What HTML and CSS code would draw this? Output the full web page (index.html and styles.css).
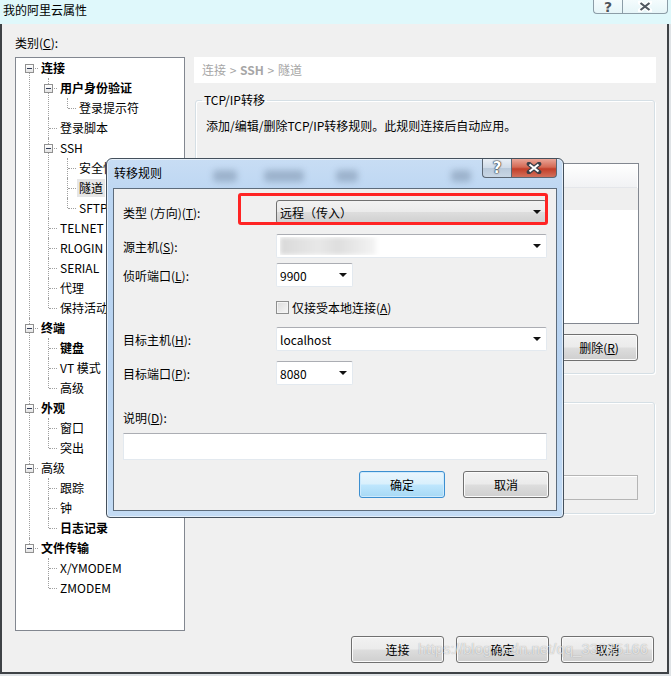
FILE: index.html
```html
<!DOCTYPE html>
<html lang="zh-CN">
<head>
<meta charset="utf-8">
<title>我的阿里云属性</title>
<link rel="stylesheet" href="styles.css">
</head>
<body>
<div class="window">
  <div class="titlebar">
    <span class="title">我的阿里云属性</span>
    <div class="capbtns">
      <span class="cap help">?</span>
      <span class="cap close"><svg width="14" height="11" viewBox="0 0 14 11"><path d="M2 1.5 L12 9.5 M12 1.5 L2 9.5" stroke="#fff" stroke-width="4.5" stroke-linecap="round"/><path d="M2.5 2 L11.5 9 M11.5 2 L2.5 9" stroke="#505860" stroke-width="2.2"/></svg></span>
    </div>
  </div>
  <div class="frame">
    <div class="catlabel">类别(<u>C</u>):</div>
    <div class="main">
      <div class="treebox">
        <ul class="tree">
          <li><div class="row"><span class="exp"></span><span class="lbl b">连接</span></div>
            <ul>
              <li><div class="row"><span class="exp"></span><span class="lbl b">用户身份验证</span></div>
                <ul><li><div class="row"><span class="lbl">登录提示符</span></div></li></ul>
              </li>
              <li><div class="row"><span class="lbl">登录脚本</span></div></li>
              <li><div class="row"><span class="exp"></span><span class="lbl">SSH</span></div>
                <ul>
                  <li><div class="row"><span class="lbl">安全性</span></div></li>
                  <li><div class="row"><span class="lbl sel">隧道</span></div></li>
                  <li><div class="row"><span class="lbl">SFTP</span></div></li>
                </ul>
              </li>
              <li><div class="row"><span class="lbl">TELNET</span></div></li>
              <li><div class="row"><span class="lbl">RLOGIN</span></div></li>
              <li><div class="row"><span class="lbl">SERIAL</span></div></li>
              <li><div class="row"><span class="lbl">代理</span></div></li>
              <li><div class="row"><span class="lbl">保持活动</span></div></li>
            </ul>
          </li>
          <li><div class="row"><span class="exp"></span><span class="lbl b">终端</span></div>
            <ul>
              <li><div class="row"><span class="lbl b">键盘</span></div></li>
              <li><div class="row"><span class="lbl">VT 模式</span></div></li>
              <li><div class="row"><span class="lbl">高级</span></div></li>
            </ul>
          </li>
          <li><div class="row"><span class="exp"></span><span class="lbl b">外观</span></div>
            <ul>
              <li><div class="row"><span class="lbl">窗口</span></div></li>
              <li><div class="row"><span class="lbl">突出</span></div></li>
            </ul>
          </li>
          <li><div class="row"><span class="exp"></span><span class="lbl">高级</span></div>
            <ul>
              <li><div class="row"><span class="lbl">跟踪</span></div></li>
              <li><div class="row"><span class="lbl">钟</span></div></li>
              <li><div class="row"><span class="lbl b">日志记录</span></div></li>
            </ul>
          </li>
          <li><div class="row"><span class="exp"></span><span class="lbl b">文件传输</span></div>
            <ul>
              <li><div class="row"><span class="lbl">X/YMODEM</span></div></li>
              <li><div class="row"><span class="lbl">ZMODEM</span></div></li>
            </ul>
          </li>
        </ul>
      </div>
      <div class="panel">
        <div class="crumb">连接 &gt; <b>SSH</b> &gt; 隧道</div>
        <fieldset class="group g1">
          <legend>TCP/IP转移</legend>
          <p class="desc">添加/编辑/删除TCP/IP转移规则。此规则连接后自动应用。</p>
          <div class="list">
            <div class="lhead"></div>
            <div class="lrow"></div>
          </div>
          <div class="listbtns">
            <button class="btn lb">添加(<u>A</u>)...</button>
            <button class="btn lb">编辑(<u>E</u>)...</button>
            <button class="btn lb">删除(<u>R</u>)</button>
          </div>
        </fieldset>
        <div class="group g2">
          <div class="dis"></div>
        </div>
      </div>
    </div>
    <div class="footer">
      <button class="btn fb">连接</button>
      <button class="btn fb">确定</button>
      <button class="btn fb">取消</button>
    </div>
  </div>

  <div class="dialog">
    <div class="dlg-title">
      <span class="dlg-caption">转移规则</span>
      <span class="tblur t1"></span>
      <span class="tblur t2"></span>
      <span class="tblur t3"></span>
      <span class="tblur t4"></span>
      <div class="dcaps">
        <span class="dcap dhelp">?</span>
        <span class="dcap dclose"><svg width="16" height="12" viewBox="0 0 16 12"><path d="M3 2 L13 10 M13 2 L3 10" stroke="#3a3f48" stroke-width="4.6" stroke-linecap="round"/><path d="M3.5 2.5 L12.5 9.5 M12.5 2.5 L3.5 9.5" stroke="#fff" stroke-width="2.2"/></svg></span>
      </div>
    </div>
    <div class="dlg-client">
      <div class="frow"><span class="flabel">类型 (方向)(<u>T</u>):</span><div class="combo dd wide"><span class="ctext">远程（传入）</span><i class="arrow"></i></div></div>
      <div class="frow r2"><span class="flabel">源主机(<u>S</u>):</span><div class="combo wide"><span class="ctext"><span class="hblur"></span></span><i class="arrow"></i></div></div>
      <div class="frow r3"><span class="flabel">侦听端口(<u>L</u>):</span><div class="combo narrow"><span class="ctext">9900</span><i class="arrow"></i></div></div>
      <div class="frow chkrow"><span class="flabel"></span><span class="chk"></span><span class="chklbl">仅接受本地连接(<u>A</u>)</span></div>
      <div class="frow r4"><span class="flabel">目标主机(<u>H</u>):</span><div class="combo wide"><span class="ctext">localhost</span><i class="arrow"></i></div></div>
      <div class="frow r5"><span class="flabel">目标端口(<u>P</u>):</span><div class="combo narrow"><span class="ctext">8080</span><i class="arrow"></i></div></div>
      <div class="desclabel">说明(<u>D</u>):</div>
      <div class="textbox"></div>
      <div class="dlgbtns">
        <button class="btn db focus">确定</button>
        <button class="btn db">取消</button>
      </div>
      <div class="mark"></div>
    </div>
  </div>

  <div class="watermark">https://blog.csdn.net/qq_33235166</div>
</div>
</body>
</html>
```
FILE: styles.css
```css
* { box-sizing: border-box; }
html, body { margin: 0; padding: 0; }
body {
  font-family: "Noto Sans CJK SC", "Microsoft YaHei", sans-serif;
  font-size: 12px;
  color: #000;
  background: #f0f0f0;
}
u { text-decoration: underline; text-underline-offset: 1px; }

.window {
  position: relative;
  width: 671px;
  height: 676px;
  background: #dfe3e6;
  overflow: hidden;
  display: flex;
  flex-direction: column;
}

/* main title bar */
.titlebar {
  height: 24px;
  background: #dff8fb;
  display: flex;
  align-items: flex-start;
}
.title { padding: 2px 0 0 3px; line-height: 16px; }
.capbtns { margin-left: auto; margin-right: 3px; display: flex; }
.cap {
  height: 14px;
  display: flex;
  align-items: center;
  justify-content: center;
  border: 1px solid #8c9da7;
  border-top: none;
  background: linear-gradient(#f4fcfd, #e6f5f8);
}
.cap.help {
  width: 29px;
  border-radius: 0 0 0 4px;
  border-right: none;
  font: bold 14px "DejaVu Sans", sans-serif;
  color: #4d555c;
  text-shadow: 0 0 1px #fff, 0 0 2px #fff;
  line-height: 14px;
}
.cap.close { width: 46px; border-radius: 0 0 4px 0; }

/* window frame */
.frame {
  flex: 1;
  display: flex;
  flex-direction: column;
  background: #f0f0f0;
  border-left: 2px solid #3e4246;
  border-right: 2px solid #3e4246;
  border-bottom: 2px solid #3e4246;
  margin: 0 2px 2px 0;
  padding: 12px 11px 9px 13px;
}
.catlabel { height: 21px; line-height: 14px; }
.main { display: flex; gap: 9px; height: 574px; }

/* tree */
.treebox {
  width: 170px;
  flex: none;
  background: #fff;
  border: 1px solid #828790;
}
.tree, .tree ul { list-style: none; margin: 0; padding: 0; }
.tree ul { padding-left: 19px; }
.tree li { position: relative; }
.tree li::before {
  content: "";
  position: absolute;
  left: 13px;
  top: 0;
  bottom: 0;
  border-left: 1px dotted #a0a0a0;
}
.tree li:last-child::before { bottom: auto; height: 10px; }
.tree > li:first-child::before { top: 10px; }
.row {
  position: relative;
  height: 20px;
  display: flex;
  align-items: center;
  padding-left: 23px;
  white-space: nowrap;
}
.row::before {
  content: "";
  position: absolute;
  left: 14px;
  top: 10px;
  width: 8px;
  border-top: 1px dotted #a0a0a0;
}
.exp {
  position: absolute;
  left: 9px;
  top: 6px;
  width: 9px;
  height: 9px;
  border: 1px solid #919191;
  background: linear-gradient(#fff, #e4e4e4);
  z-index: 1;
}
.exp::after {
  content: "";
  position: absolute;
  left: 1px;
  top: 3px;
  width: 5px;
  height: 1px;
  background: #2f3a55;
}
.lbl { padding: 0 2px; line-height: 18px; }
.lbl.b { font-weight: bold; }
.lbl.sel { background: #e6e6e6; }

/* right panel */
.panel { flex: 1; display: flex; flex-direction: column; }
.crumb {
  height: 26px;
  line-height: 26px;
  background: #fff;
  padding-left: 8px;
  color: #a6a6a6;
  word-spacing: 1px;
}
.group {
  border: 1px solid #d5dfe5;
  border-radius: 3px;
  box-shadow: inset 1px 1px 0 #fff, 1px 1px 0 #fff;
}
.g1 {
  margin: 9px 1px 0 1px;
  padding: 0 15px 12px 10px;
  min-width: 0;
}
.g1 legend {
  padding: 0 2px;
  margin-left: -4px;
  line-height: 16px;
}
.desc { margin: 10px 0 0 0; line-height: 16px; }
.list {
  margin-top: 29px;
  height: 161px;
  background: #fff;
  border: 1px solid #828790;
}
.lhead {
  height: 24px;
  background: linear-gradient(#ffffff, #f1f2f4);
  border-bottom: 1px solid #e4e6ea;
  margin-right: 1px;
}
.lrow { height: 22px; background: #efefef; }
.listbtns { display: flex; justify-content: flex-end; gap: 8px; margin-top: 10px; margin-right: 1px; }
.btn {
  font: 12px "Noto Sans CJK SC", "Microsoft YaHei", sans-serif;
  color: #000;
  height: 27px;
  padding: 0;
  border: 1px solid #707070;
  border-radius: 3px;
  background: linear-gradient(#f2f2f2 0%, #ebebeb 48%, #dddddd 52%, #cfcfcf 100%);
  box-shadow: inset 0 0 0 1px #fbfbfb;
}
.btn.lb { width: 78px; }
.g2 {
  margin: 28px 1px 0 1px;
  height: 112px;
  padding: 72px 16px 0 10px;
}
.dis {
  height: 25px;
  border: 1px solid #b5b5b5;
  background: #f0f0f0;
  box-shadow: inset 1px 1px 0 #fff;
}

.footer {
  display: flex;
  justify-content: flex-end;
  gap: 12px;
  margin-top: 5px;
  padding-right: 2px;
}
.btn.fb { width: 93px; }

/* dialog */
.dialog {
  position: absolute;
  left: 106px;
  top: 158px;
  width: 458px;
  border: 1px solid #44505c;
  border-radius: 6px 6px 4px 4px;
  padding: 0 6px 6px 6px;
  background: linear-gradient(#c8ddf4 0%, #bcd6f2 10%, #b7d2f0 60%, #c3dbf4 100%);
  box-shadow: inset 0 0 0 1px rgba(255,255,255,0.55);
}
.dlg-title {
  position: relative;
  height: 29px;
  display: flex;
  align-items: flex-start;
}
.dlg-caption { padding: 6px 0 0 1px; line-height: 16px; }
.tblur {
  position: absolute;
  top: 11px;
  height: 12px;
  background: rgba(70, 90, 115, 0.3);
  filter: blur(3px);
  border-radius: 4px;
}
.t1 { left: 100px; width: 24px; }
.t2 { left: 151px; width: 40px; }
.t3 { left: 223px; width: 22px; }
.t4 { left: 338px; width: 20px; }
.dcaps { margin-left: auto; display: flex; }
.dcap {
  height: 19px;
  display: flex;
  align-items: center;
  justify-content: center;
  border: 1px solid #5b6673;
  border-top: none;
}
.dhelp {
  width: 29px;
  border-right: none;
  border-radius: 0 0 0 4px;
  background: linear-gradient(#e9eff6, #cfdbe8 50%, #b9c9da 51%, #c9d6e4);
  font: bold 15px "DejaVu Sans", sans-serif;
  color: #fff;
  text-shadow: 0 0 1px #2b2f36, 0 0 1px #2b2f36, 0 0 2px #2b2f36;
}
.dclose {
  width: 46px;
  border-radius: 0 0 4px 0;
  background: linear-gradient(#e9a597 0%, #d56a55 45%, #c23f2a 55%, #d2705c 100%);
}
.dlg-client {
  position: relative;
  background: #f0f0f0;
  border: 1px solid #5d6c7c;
  padding: 11px 8px 12px 9px;
}
.frow { display: flex; align-items: center; height: 24px; }
.r2 { margin-top: 10px; }
.r3 { margin-top: 5px; }
.chkrow { margin-top: 7px; height: 26px; }
.r4 { margin-top: 7px; }
.r5 { margin-top: 10px; }
.flabel { width: 153px; flex: none; }
.combo {
  height: 24px;
  display: flex;
  align-items: center;
  padding-left: 3px;
  background: #fff;
  border: 1px solid #e3e9ef;
  border-top-color: #abadb3;
  border-radius: 2px;
}
.combo.wide { width: 271px; }
.combo.narrow { width: 77px; }
.combo.dd {
  border: 1px solid #707070;
  border-radius: 3px;
  background: linear-gradient(#f2f2f2 0%, #ebebeb 48%, #dddddd 52%, #cfcfcf 100%);
}
.ctext { flex: 1; white-space: nowrap; overflow: hidden; }
.arrow {
  flex: none;
  width: 0;
  height: 0;
  margin-right: 5px;
  border-left: 4px solid transparent;
  border-right: 4px solid transparent;
  border-top: 4px solid #111;
}
.hblur {
  display: block;
  width: 96px;
  height: 18px;
  background: linear-gradient(90deg, #d9d9d9, #e8e8e8 40%, #dedede 60%, #f4f4f4);
  filter: blur(2px);
}
.chk {
  width: 13px;
  height: 13px;
  flex: none;
  border: 1px solid #8e8f8f;
  background: linear-gradient(135deg, #dcdcdc, #f6f6f6);
  box-shadow: inset 0 0 0 1px #f4f4f4;
}
.chklbl { margin-left: 3px; }
.desclabel { margin-top: 25px; height: 16px; line-height: 16px; }
.textbox {
  margin-top: 7px;
  width: 424px;
  height: 27px;
  background: #fff;
  border: 1px solid #e3e9ef;
  border-top-color: #abadb3;
}
.dlgbtns {
  display: flex;
  justify-content: flex-end;
  gap: 18px;
  margin-top: 11px;
  margin-right: -1px;
}
.btn.db { width: 86px; }
.btn.focus {
  border-color: #3c8fd0;
  background: linear-gradient(#eaf6fd 0%, #d9f0fc 48%, #bee6fd 52%, #a7d9f5 100%);
  box-shadow: inset 0 0 0 1px #cdeafd;
}
.mark {
  position: absolute;
  left: 124px;
  top: 4px;
  width: 310px;
  height: 32px;
  border: 3px solid #ff2424;
  border-radius: 3px;
}

.watermark {
  position: absolute;
  left: 418px;
  top: 640px;
  font: 15px "Liberation Sans", Arial, sans-serif;
  color: rgba(255, 255, 255, 0.7);
  text-shadow: 0 0 1px rgba(0,0,0,0.35);
  white-space: nowrap;
}
```
